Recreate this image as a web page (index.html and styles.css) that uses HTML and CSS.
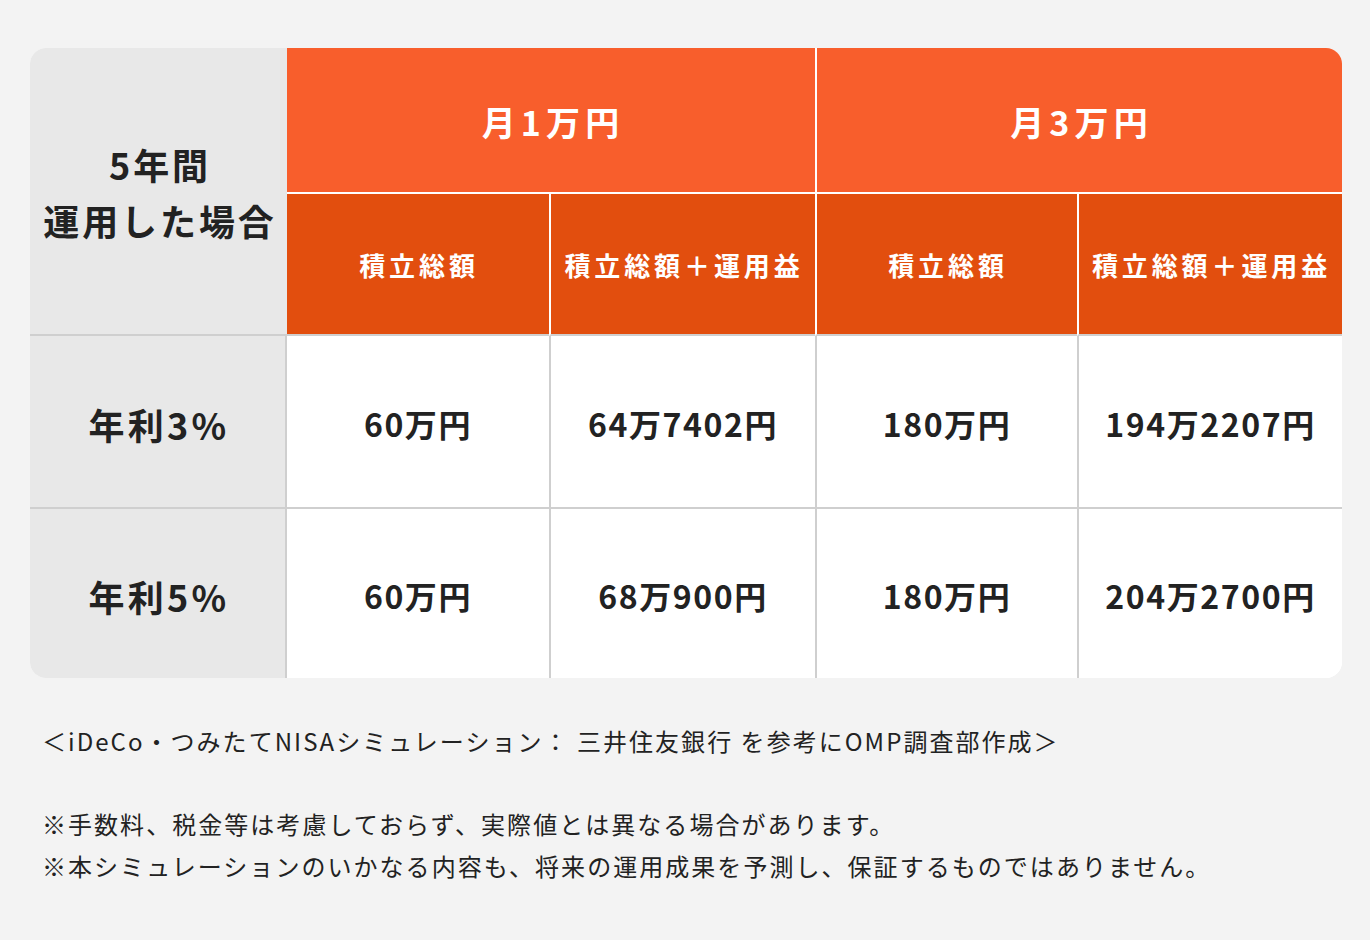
FILE: index.html
```html
<!DOCTYPE html>
<html lang="ja">
<head>
<meta charset="utf-8">
<link rel="stylesheet" href="styles.css">
</head>
<body>
<div class="page">
  <div class="table">
    <div class="cell corner">5年間<br>運用した場合</div>
    <div class="cell head span2">月1万円</div>
    <div class="cell head span2 sep">月3万円</div>
    <div class="cell sub">積立総額</div>
    <div class="cell sub sep">積立総額＋運用益</div>
    <div class="cell sub sep">積立総額</div>
    <div class="cell sub sep">積立総額＋運用益</div>

    <div class="cell label first">年利3%</div>
    <div class="cell val first">60万円</div>
    <div class="cell val first">64万7402円</div>
    <div class="cell val first">180万円</div>
    <div class="cell val first">194万2207円</div>

    <div class="cell label">年利5%</div>
    <div class="cell val">60万円</div>
    <div class="cell val">68万900円</div>
    <div class="cell val">180万円</div>
    <div class="cell val">204万2700円</div>
  </div>
  <div class="notes">
    <p>＜iDeCo・つみたてNISAシミュレーション： 三井住友銀行 を参考にOMP調査部作成＞</p>
    <p class="gap">※手数料、税金等は考慮しておらず、実際値とは異なる場合があります。</p>
    <p>※本シミュレーションのいかなる内容も、将来の運用成果を予測し、保証するものではありません。</p>
  </div>
</div>
</body>
</html>
```

FILE: styles.css
```css
html, body {
  margin: 0;
  padding: 0;
  background: #f3f3f3;
}
body {
  font-family: "Noto Sans CJK JP", "Noto Sans", sans-serif;
  color: #222;
}
.page {
  padding: 48px 28px 0 30px;
}
.table {
  display: grid;
  grid-template-columns: 257px 262px 266px 262px 265px;
  grid-template-rows: 146px 142px 173px 169px;
  border-radius: 16px;
  overflow: hidden;
  background: #fff;
}
.cell {
  display: flex;
  align-items: center;
  justify-content: center;
  text-align: center;
  font-weight: 700;
  box-sizing: border-box;
}
.corner {
  grid-row: 1 / span 2;
  background: #e8e8e8;
  font-size: 36px;
  line-height: 56px;
  letter-spacing: 0.08em;
  padding-left: 3px;
  padding-top: 2px;
  border-bottom: 2px solid #cfcfcf;
}
.head {
  background: #f85e2c;
  color: #fff;
  font-size: 34px;
  letter-spacing: 0.15em;
  padding-top: 2px;
  padding-left: 4px;
  border-bottom: 2px solid #fff;
}
.span2 { grid-column: span 2; }
.sub {
  background: #e24e0e;
  color: #fff;
  font-size: 26px;
  letter-spacing: 0.15em;
  padding-top: 0;
  padding-left: 2px;
  border-bottom: 2px solid #cfcfcf;
}
.sep { border-left: 2px solid #fff; }
.label {
  background: #e8e8e8;
  font-size: 36px;
  letter-spacing: 0.09em;
  padding-top: 4px;
  padding-left: 3px;
  border-right: 2px solid #cfcfcf;
}
.val {
  background: #fff;
  font-size: 32px;
  letter-spacing: 0.05em;
  padding-top: 3px;
}
.val + .val { border-left: 2px solid #cfcfcf; }
.first { border-bottom: 2px solid #cfcfcf; }
.notes {
  margin-top: 42px;
  padding-left: 12px;
  font-size: 24px;
  line-height: 41.5px;
  letter-spacing: 0.085em;
  color: #222;
}
.notes p { margin: 0; }
.notes .gap { margin-top: 41.5px; }
```
